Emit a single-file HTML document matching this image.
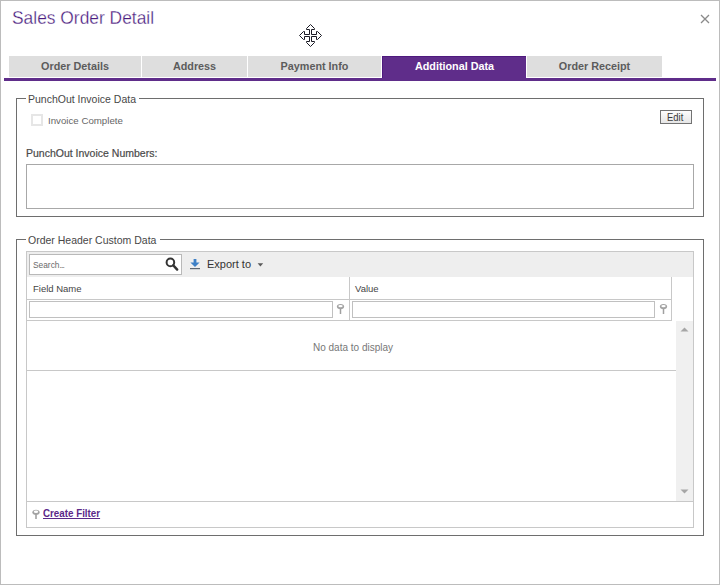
<!DOCTYPE html>
<html><head><meta charset="utf-8">
<style>
*{margin:0;padding:0;box-sizing:border-box}
html,body{width:720px;height:585px;overflow:hidden;background:#fff}
body{position:relative;font-family:"Liberation Sans",sans-serif}
.a{position:absolute}
.t{position:absolute;white-space:nowrap;line-height:1}
.frame{left:0;top:0;width:720px;height:585px;border:1px solid #bcbcbc}
.tab{top:56px;height:21px;background:#dedede;color:#5c5c5c;font-weight:bold;font-size:10.8px;text-align:center}
.tab span{position:absolute;left:0;right:0;top:4px;line-height:12px}
</style></head><body>
<div class="a frame"></div>

<div class="t" id="title" style="left:12px;top:8px;font-size:19px;color:#4a1a7e;-webkit-text-stroke:0.3px #fff;transform:scaleX(0.915);transform-origin:0 0">Sales Order Detail</div>

<svg class="a" style="left:699px;top:13px" width="12" height="12" viewBox="0 0 12 12"><path d="M2 2L10 10M10 2L2 10" stroke="#8a8a8a" stroke-width="1.3" fill="none"/></svg>

<!-- move cursor -->
<svg class="a" style="left:299px;top:24px" width="23" height="23" viewBox="0 0 23 23">
<path d="M11.5 0.5L15.5 4.5V5.5H12.5V10.5H17.5V7.5H18.5L22.5 11.5L18.5 15.5H17.5V12.5H12.5V17.5H15.5V18.5L11.5 22.5L7.5 18.5V17.5H10.5V12.5H5.5V15.5H4.5L0.5 11.5L4.5 7.5H5.5V10.5H10.5V5.5H7.5V4.5Z" fill="#fff" stroke="#1a1a24" stroke-width="1" stroke-linejoin="miter"/>
</svg>

<!-- tabs -->
<div class="a tab" style="left:9px;width:132px"><span>Order Details</span></div>
<div class="a tab" style="left:142px;width:105px"><span>Address</span></div>
<div class="a tab" style="left:248px;width:133px"><span>Payment Info</span></div>
<div class="a tab" style="left:382px;width:144px;height:22px;background:#5f2d8a;border-left:1px solid #4e1a7e;border-top:1px solid #4e1a7e;color:#fff"><span style="top:3px">Additional Data</span></div>
<div class="a tab" style="left:527px;width:135px"><span>Order Receipt</span></div>
<div class="a" style="left:4px;top:78px;width:712px;height:3px;background:#5f2d8a"></div>

<!-- fieldset 1 -->
<div class="a" style="left:16px;top:98px;width:688px;height:119px;border:1px solid #6e6e6e"></div>
<div class="a" style="left:26px;top:95px;width:113px;height:6px;background:#fff"></div>
<div class="t" style="left:28px;top:94px;font-size:10.5px;color:#474747">PunchOut Invoice Data</div>
<div class="a" style="left:31px;top:114px;width:12px;height:12px;border:2px solid #e6e6e6"></div>
<div class="t" style="left:48px;top:116px;font-size:9.7px;color:#666">Invoice Complete</div>
<div class="a" style="left:660px;top:110px;width:32px;height:14px;border:1px solid #727272;background:linear-gradient(#fdfdfd,#e6e6e6)"></div>
<div class="t" style="left:667px;top:112px;font-size:10.5px;color:#3a3a3a;transform:scaleX(0.9);transform-origin:0 0">Edit</div>
<div class="t" style="left:26px;top:148px;font-size:10.5px;color:#4a4a4a;-webkit-text-stroke:0.2px #4a4a4a">PunchOut Invoice Numbers:</div>
<div class="a" style="left:26px;top:164px;width:668px;height:45px;border:1px solid #a8a8a8"></div>

<!-- fieldset 2 -->
<div class="a" style="left:16px;top:239px;width:688px;height:297px;border:1px solid #6e6e6e"></div>
<div class="a" style="left:26px;top:236px;width:134px;height:6px;background:#fff"></div>
<div class="t" style="left:28px;top:235px;font-size:10.5px;color:#474747">Order Header Custom Data</div>

<!-- grid -->
<div class="a" style="left:26px;top:251px;width:668px;height:277px;border:1px solid #c8c8c8"></div>
<div class="a" style="left:27px;top:252px;width:666px;height:25px;background:#eeeeee"></div>
<div class="a" style="left:29px;top:254px;width:153px;height:21px;border:1px solid #b9b9b9;background:#fff"></div>
<div class="t" style="left:33px;top:260px;font-size:9.5px;color:#6a6a6a;transform:scaleX(0.88);transform-origin:0 0">Search<span style="letter-spacing:-0.9px">...</span></div>
<svg class="a" style="left:164px;top:257px" width="16" height="16" viewBox="0 0 16 16"><circle cx="6.4" cy="5.4" r="3.8" stroke="#333" stroke-width="2" fill="none"/><path d="M9.3 8.4L13.2 12.6" stroke="#333" stroke-width="2.4" stroke-linecap="round"/></svg>
<svg class="a" style="left:189px;top:258px" width="12" height="12" viewBox="0 0 12 12"><path d="M4.6 1H7.4V4.4H10.6L6 9L1.4 4.4H4.6Z" fill="#3e80c6"/><rect x="1" y="10" width="10" height="1.2" fill="#5d6670"/></svg>
<div class="t" style="left:207px;top:259px;font-size:11px;color:#333">Export to</div>
<svg class="a" style="left:257px;top:263px" width="7" height="4" viewBox="0 0 7 4"><path d="M0.6 0.3H6.2L3.4 3.4Z" fill="#5a5a5a"/></svg>

<!-- header -->
<div class="t" style="left:33px;top:284px;font-size:9.5px;color:#444">Field Name</div>
<div class="t" style="left:355px;top:284px;font-size:9.5px;color:#444">Value</div>
<div class="a" style="left:349px;top:277px;width:1px;height:44px;background:#c8c8c8"></div>
<div class="a" style="left:671px;top:277px;width:1px;height:44px;background:#c8c8c8"></div>
<div class="a" style="left:27px;top:299px;width:645px;height:1px;background:#c8c8c8"></div>
<div class="a" style="left:27px;top:320px;width:645px;height:1px;background:#c8c8c8"></div>
<div class="a" style="left:29px;top:301px;width:304px;height:17px;border:1px solid #c0c0c0"></div>
<div class="a" style="left:352px;top:301px;width:303px;height:17px;border:1px solid #c0c0c0"></div>
<svg class="a" style="left:336px;top:303px" width="9" height="12" viewBox="0 0 9 12"><ellipse cx="4.5" cy="3.6" rx="3.6" ry="2.6" fill="#a3a3a3"/><ellipse cx="4.5" cy="3.1" rx="2.2" ry="1.2" fill="#fff"/><path d="M4.5 6V11" stroke="#a0a0a0" stroke-width="1.5"/></svg>
<svg class="a" style="left:659px;top:303px" width="9" height="12" viewBox="0 0 9 12"><ellipse cx="4.5" cy="3.6" rx="3.6" ry="2.6" fill="#a3a3a3"/><ellipse cx="4.5" cy="3.1" rx="2.2" ry="1.2" fill="#fff"/><path d="M4.5 6V11" stroke="#a0a0a0" stroke-width="1.5"/></svg>

<!-- data area -->
<div class="a" style="left:676px;top:321px;width:17px;height:180px;background:#f0f0f0"></div>
<svg class="a" style="left:680px;top:326px" width="9" height="6" viewBox="0 0 9 6"><path d="M0.5 5.5H8.5L4.5 1.5Z" fill="#a6a6a6"/></svg>
<svg class="a" style="left:680px;top:489px" width="9" height="6" viewBox="0 0 9 6"><path d="M0.5 0.5H8.5L4.5 4.5Z" fill="#a6a6a6"/></svg>
<div class="t" style="left:313px;top:343px;font-size:10px;color:#777">No data to display</div>
<div class="a" style="left:27px;top:370px;width:649px;height:1px;background:#c8c8c8"></div>
<div class="a" style="left:27px;top:501px;width:666px;height:1px;background:#c8c8c8"></div>
<svg class="a" style="left:32px;top:509px" width="9" height="11" viewBox="0 0 9 11"><ellipse cx="4" cy="3.3" rx="3.6" ry="2.6" fill="#a3a3a3"/><ellipse cx="4" cy="2.8" rx="2.2" ry="1.2" fill="#fff"/><path d="M4 5.5V10" stroke="#a0a0a0" stroke-width="1.6"/></svg>
<div class="t" style="left:43px;top:509px;font-size:10.3px;font-weight:bold;color:#5b2889;text-decoration:underline;transform:scaleX(0.95);transform-origin:0 0">Create Filter</div>
</body></html>
